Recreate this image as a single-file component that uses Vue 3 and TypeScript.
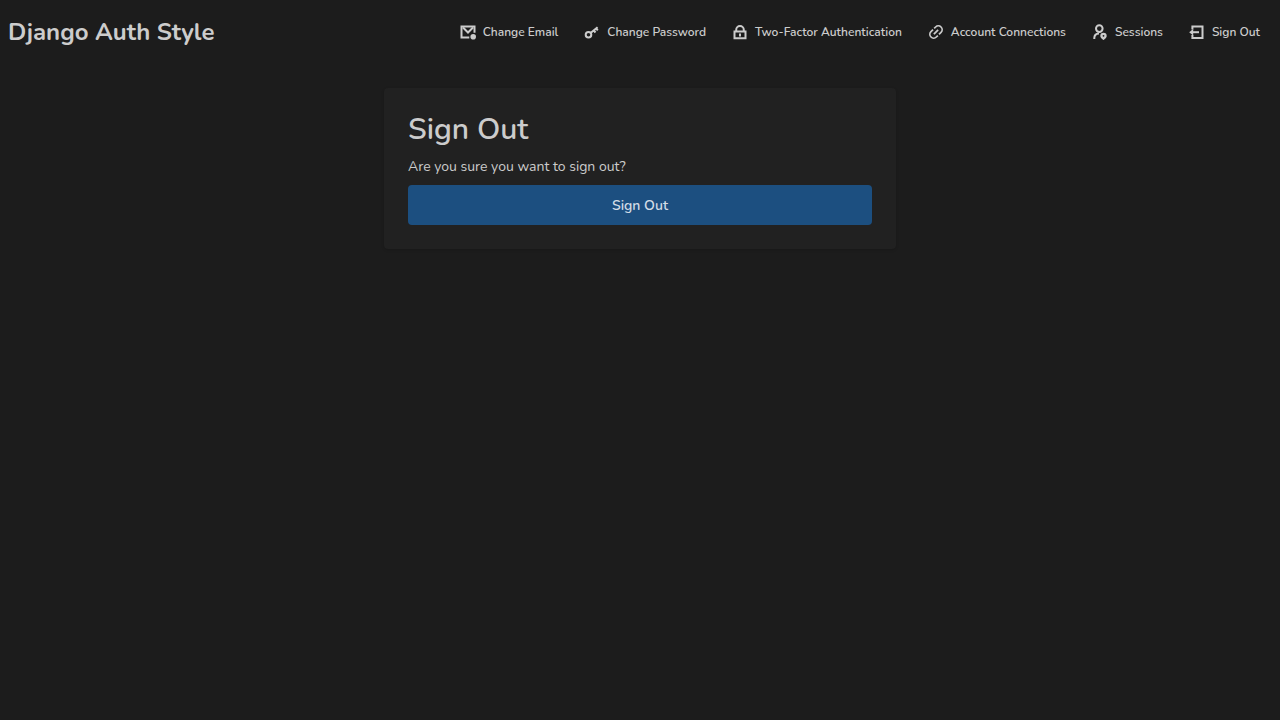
<script setup lang="ts">
interface NavItem {
  label: string
  icon: string
}

const items: NavItem[] = [
  { label: 'Change Email', icon: 'mail' },
  { label: 'Change Password', icon: 'key' },
  { label: 'Two-Factor Authentication', icon: 'lock' },
  { label: 'Account Connections', icon: 'link' },
  { label: 'Sessions', icon: 'user' },
  { label: 'Sign Out', icon: 'exit' },
]
</script>

<template>
  <div class="page">
    <header class="bar">
      <a class="brand" href="#">Django Auth Style</a>
      <nav class="nav">
        <a v-for="item in items" :key="item.icon" class="nav-link" href="#">
          <svg class="icon" viewBox="0 0 16 16" aria-hidden="true">
            <template v-if="item.icon === 'mail'">
              <path d="M14.5 8.8V2.5H1.5v11h7.8" />
              <path d="M3 3.5l5 5 5-5" />
              <circle class="solid" cx="13.2" cy="12.8" r="2.8" />
            </template>
            <template v-else-if="item.icon === 'key'">
              <circle cx="4.5" cy="10.8" r="2.8" />
              <path d="M6.8 8.8L13.6 3.2M9.8 6.5l1.7 2M12.2 4.6l1.6 1.8" />
            </template>
            <template v-else-if="item.icon === 'lock'">
              <path d="M2.5 7.5h11v6.8h-11zM4.2 7V5.9a3.8 3.8 0 0 1 7.6 0V7" />
              <path d="M8 9.5v3" />
            </template>
            <template v-else-if="item.icon === 'link'">
              <g class="chain" transform="rotate(-45 8 8)">
                <path d="M7.6 4.2H4.7a3.8 3.8 0 0 0 0 7.6h2.1" />
                <path d="M8.4 11.8h2.9a3.8 3.8 0 0 0 0-7.6H9.2" />
                <path d="M5 8h6" />
              </g>
            </template>
            <template v-else-if="item.icon === 'user'">
              <circle cx="7.3" cy="4.6" r="3.3" />
              <path d="M2.3 15v-1c0-2.6 1.8-4.4 4.7-4.6" />
              <path class="solid" fill-rule="evenodd" d="M11.5 8.7a3.2 3.2 0 0 1 3.2 3.2c0 2-3.2 4.1-3.2 4.1s-3.2-2.1-3.2-4.1a3.2 3.2 0 0 1 3.2-3.2zm0 2.2a.9.9 0 1 0 0 1.8.9.9 0 0 0 0-1.8z" />
            </template>
            <template v-else>
              <path d="M3.4 5.5v-3h10.1v11.5H3.4v-3" />
              <path d="M10 8.2H3" />
              <path class="solid" d="M.2 8.2l4-3.2v6.4z" />
            </template>
          </svg>
          <span>{{ item.label }}</span>
        </a>
      </nav>
    </header>
    <main class="main">
      <section class="card">
        <h1 class="title">Sign Out</h1>
        <p class="prompt">Are you sure you want to sign out?</p>
        <form @submit.prevent>
          <button class="submit" type="submit">Sign Out</button>
        </form>
      </section>
    </main>
  </div>
</template>

<style>
body {
  background: #1c1c1c;
}
</style>

<style scoped>
.page {
  min-height: 100vh;
  background: #1c1c1c;
  color: #cccccc;
  font-family: Nunito, Lato, "Open Sans", sans-serif;
  font-size: 14px;
  line-height: 20px;
}
.bar {
  display: flex;
  align-items: center;
  justify-content: space-between;
  height: 64px;
  padding: 0 8px;
}
.brand {
  color: inherit;
  font-size: 24px;
  font-weight: 700;
  line-height: 32px;
  text-decoration: none;
  white-space: nowrap;
}
.nav {
  display: flex;
  gap: 2px;
}
.nav-link {
  display: flex;
  align-items: center;
  gap: 7px;
  padding: 8px 12px;
  color: inherit;
  font-size: 12px;
  font-weight: 600;
  line-height: 16px;
  text-decoration: none;
  white-space: nowrap;
}
.icon {
  flex: none;
  width: 16px;
  height: 16px;
  fill: none;
  stroke: currentColor;
  stroke-width: 2;
}
.solid {
  fill: currentColor;
  stroke: none;
}
.chain {
  stroke-width: 1.7;
}
.main {
  display: flex;
  justify-content: center;
  padding: 24px 16px;
}
.card {
  box-sizing: border-box;
  width: 100%;
  max-width: 512px;
  padding: 24px;
  border-radius: 4px;
  background: #212121;
  box-shadow: 0 1px 3px rgba(0, 0, 0, 0.15);
}
.title {
  margin: 0 0 8px;
  font-size: 30px;
  font-weight: 600;
  line-height: 36px;
}
.prompt {
  margin: 0 0 8px;
  line-height: 21px;
}
.submit {
  display: block;
  width: 100%;
  height: 40px;
  padding: 1px 16px 0;
  border: 0;
  border-radius: 4px;
  background: #1c4f80;
  color: #d3dce6;
  font: inherit;
  font-weight: 600;
}
</style>
